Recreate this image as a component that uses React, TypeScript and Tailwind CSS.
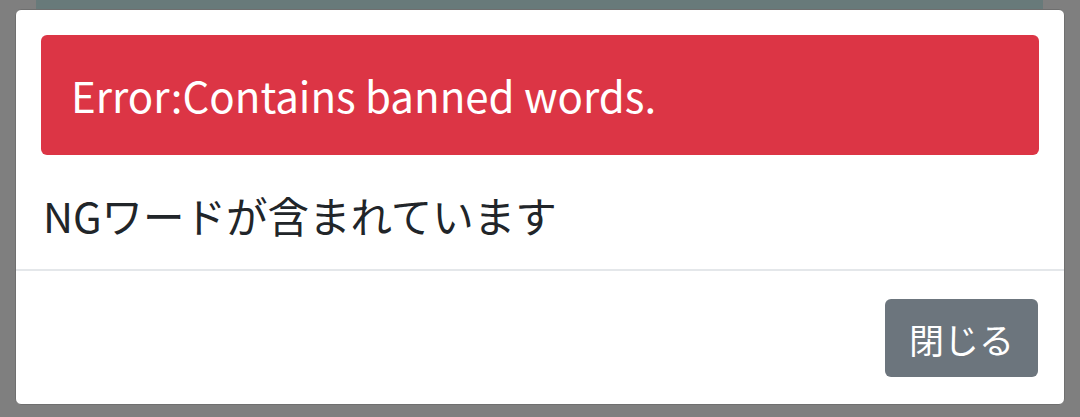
import React from 'react';

const font = { fontFamily: '"Noto Sans CJK JP", "Noto Sans", sans-serif' };

const App: React.FC = () => {
  return (
    <div className="w-[1080px] h-[417px] bg-[#7f7f7f] overflow-hidden" style={font}>
      {/* page content behind the backdrop */}
      <div className="ml-[36px] w-[1007px] h-[10px] bg-[#687a7a]" />

      <div className="mx-[15px] -mt-px w-[1050px] h-[396px] bg-white rounded-[6px] border border-[#6f6f6f] flex flex-col">
        <div className="px-[25px] pt-[25px] pb-[16px]">
          <div className="h-[120px] bg-[#dc3545] rounded-[6px] flex items-center px-[30px]">
            <span className="text-white text-[42px] leading-none">Error:Contains banned words.</span>
          </div>
          <p className="mt-[22px] pl-[2px] text-[#212529] text-[41.5px] leading-[76px]">NGワードが含まれています</p>
        </div>

        <div className="border-t-2 border-[#e4e7ea]" />

        <div className="flex justify-end px-[26px] pt-[28px]">
          <button className="w-[153px] h-[78px] bg-[#6c757d] text-white text-[35px] rounded-[6px] leading-none">
            閉じる
          </button>
        </div>
      </div>
    </div>
  );
};

export default App;
